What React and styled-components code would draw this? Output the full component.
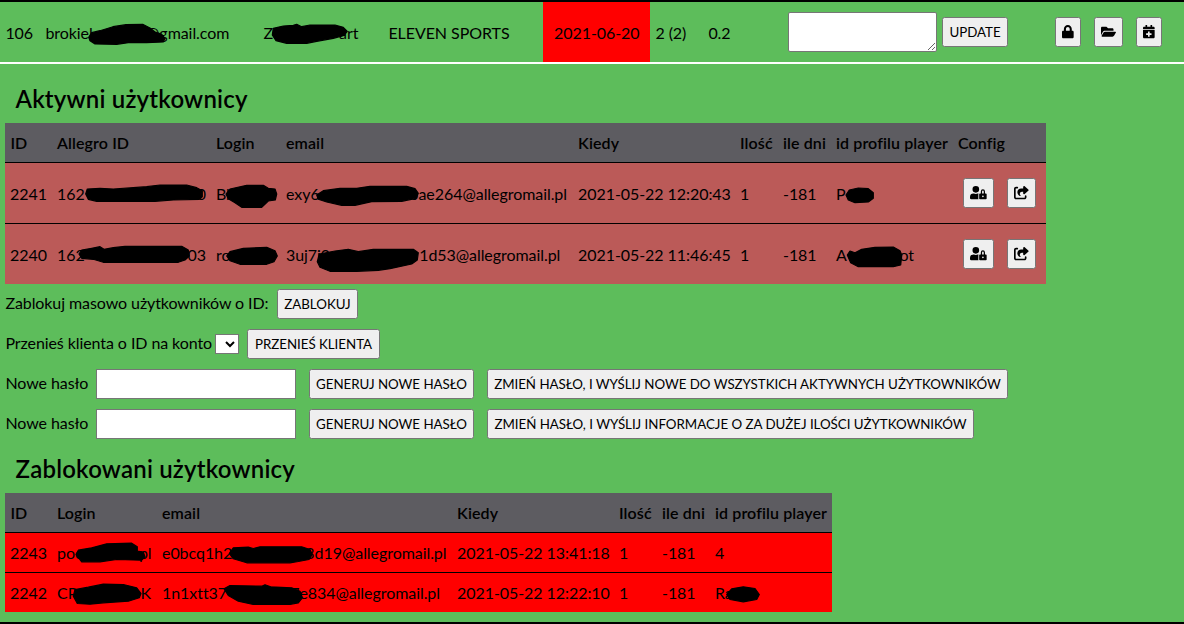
import React from 'react';
import styled, { createGlobalStyle } from 'styled-components';
import { FaLock, FaFolderOpen, FaCalendarPlus, FaUserLock } from 'react-icons/fa';
import { FaShareFromSquare } from 'react-icons/fa6';

const GlobalStyle = createGlobalStyle`
  *, *::before, *::after { box-sizing: border-box; }
  body {
    margin: 0;
    background: #5dbd5b;
    color: #000;
    font: 16px/24px Lato, sans-serif;
    letter-spacing: -0.06px;
    overflow: hidden;
  }
`;

const Page = styled.main`
  height: 624px;
  border-top: 2px solid #000;
  border-bottom: 2px solid #000;
`;

const AccountRow = styled.header`
  display: grid;
  grid-template-columns: 40px 218px 125px 160px 107px 53px 80px 267px 1fr;
  height: 62px;
  border-bottom: 2px solid #fff;
`;

const AccountCell = styled.div`
  display: flex;
  align-items: center;
  gap: ${(p) => p.$gap || 0}px;
  padding-left: ${(p) => p.$pad ?? 5.4}px;
  padding-top: ${(p) => (p.$gap ? 0 : 2)}px;
  background: ${(p) => p.$bg || 'transparent'};
  white-space: nowrap;
`;

const Note = styled.textarea`
  width: 149px;
  height: 40px;
  margin: 0;
  border: 1px solid #767676;
  border-radius: 2px;
  background: #fff;
`;

const Button = styled.button`
  display: inline-flex;
  align-items: center;
  justify-content: center;
  flex: none;
  width: ${(p) => (p.$w ? `${p.$w}px` : 'auto')};
  height: 30px;
  margin: 0;
  padding: 0;
  border: 1px solid #767676;
  border-radius: 2.5px;
  background: #efefef;
  color: #000;
  font: 13.333px/20px Lato, sans-serif;
  letter-spacing: -0.03px;
  white-space: nowrap;

  svg {
    width: ${(p) => p.$icon || 13.33}px;
    height: 13.33px;
    flex: none;
  }
`;

const Heading = styled.h2`
  height: ${(p) => p.$h}px;
  margin: 0;
  padding: 0 0 9px 15.5px;
  display: flex;
  align-items: flex-end;
  font-size: 24px;
  line-height: 30px;
  font-weight: 600;
  letter-spacing: 0.2px;
`;

const Table = styled.table`
  width: ${(p) => p.$w}px;
  margin-left: 5px;
  table-layout: fixed;
  border-collapse: separate;
  border-spacing: 0;
`;

const HeadCell = styled.th`
  width: ${(p) => p.$w}px;
  height: 40px;
  padding: 0 0 0 5px;
  background: #5d5c61;
  border-bottom: 1px solid #000;
  font-weight: 600;
  letter-spacing: 0.1px;
  text-align: left;
  white-space: nowrap;

  &:first-child { padding-left: 5.4px; }
`;

const Row = styled.tr`
  height: ${(p) => p.$h}px;
  background: ${(p) => p.$bg};

  &:not(:last-child) td { border-bottom: 1px solid #000; }
  &:last-child { height: ${(p) => p.$h - 1}px; }
  td { padding-top: ${(p) => p.$shift || 0}px; }
`;

const Cell = styled.td`
  padding: 0 0 0 5px;
  white-space: nowrap;
  vertical-align: middle;
`;

const Actions = styled.div`
  display: flex;
  gap: 13px;
  margin-top: -2px;
  padding-left: 5px;
`;

const Controls = styled.section`
  display: flex;
  flex-direction: column;
  gap: 10px;
  padding: 5px 0 0 5px;
`;

const ControlLine = styled.div`
  display: flex;
  align-items: center;
  height: 30px;
`;

const Label = styled.label`
  width: ${(p) => p.$w}px;
  flex: none;
  padding: 0 0 2px 0.4px;
  letter-spacing: -0.08px;
  white-space: nowrap;
`;

const Spacer = styled.span`
  width: ${(p) => p.$w}px;
  flex: none;
`;

const Password = styled.input`
  width: 200px;
  height: 30px;
  margin: 0 13px 0 0;
  border: 1px solid #767676;
  background: #fff;
`;

const AccountSelect = styled.select`
  width: 24px;
  height: 20px;
  margin: 0 8px 0 0;
  border: 1px solid #767676;
  background: #fff;
`;

const MaskedText = styled.span`
  position: relative;
  display: flex;
  justify-content: space-between;
  width: ${(p) => p.$w}px;
  height: 24px;
`;

const Scribble = styled.svg`
  position: absolute;
  left: 0;
  top: -1px;
  width: 100%;
  height: 100%;
  overflow: visible;
`;

function Masked({ start, end, width, shape }) {
  return (
    <MaskedText $w={width}>
      <span>{start}</span>
      <span>{end}</span>
      <Scribble aria-hidden="true">
        <polygon points={shape} fill="#000" stroke="#000" strokeWidth="1.2" strokeLinejoin="round" />
      </Scribble>
    </MaskedText>
  );
}

const activeColumns = [
  ['ID', 47], ['Allegro ID', 159], ['Login', 70], ['email', 292], ['Kiedy', 162],
  ['Ilość', 43], ['ile dni', 53], ['id profilu player', 122], ['Config', 93],
];

const blockedColumns = [
  ['ID', 47], ['Login', 105], ['email', 295], ['Kiedy', 162],
  ['Ilość', 43], ['ile dni', 53], ['id profilu player', 122],
];

const activeUsers = [
  [
    '2241',
    <Masked start="162" end="00" width={149} shape="28.7,13 30.3,8 43,7.3 56.3,8 76.3,6.7 89.7,5.7 103,4 129.7,4 139.7,6.7 145.3,9.7 145.3,15.7 142.3,18.3 116.3,19 98,20.3 39.7,20.3 31.3,18.3" />,
    <Masked start="Bl" width={61} shape="10,13 14,8 30.7,4.3 47.3,4.3 52.3,7.3 59,8 60.7,13 59.3,19 52.3,20 45.7,26.3 25.7,26.3 19,21.7 12.3,17.7" />,
    <Masked start="exy6" end="bae264@allegromail.pl" width={281} shape="30.7,14 37.3,9.7 54,7.3 70.7,7.3 84,5.3 120.7,5.3 129,7.7 132.3,12.3 130,17.3 115.7,20.3 85.7,20.7 69,24.3 55.7,24.3 40.7,21 32.3,18.3" />,
    '2021-05-22 12:20:43', '1', '-181',
    <Masked start="P" width={38} shape="10,14 13.3,9 22.3,7 32.3,7.7 37.3,11.7 37.3,17.3 32.3,21 19,21.7 12.3,19" />,
  ],
  [
    '2240',
    <Masked start="162" end="03" width={149} shape="22,12 24.7,8 34.7,6.3 43,4.7 47,7.3 56.3,5.7 68,4.3 124.7,4.3 131.3,8 132.3,14 128,18 121.3,20.3 46.3,20.3 36.3,17.3 24.7,16.3" />,
    <Masked start="ro" width={61} shape="10.7,14 14,9.7 27.3,6.3 50.7,5.3 59,8.7 61.3,14 58,19.7 50.7,22.3 24,22.3 14,18.7" />,
    <Masked start="3uj7i0" end="1d53@allegromail.pl" width={274.3} shape="31.3,19.7 33.3,12 49,9 62.3,7.3 72.3,9.7 87.3,7.3 127.3,7.3 132.3,10.7 131.3,18 125.7,22 104,26.7 92.3,28.3 70.7,29.3 44,29.3 34,25.3" />,
    '2021-05-22 11:46:45', '1', '-181',
    <Masked start="A" end="ot" width={78} shape="11.3,13 14,9 19,10.7 25.7,7.3 39,5.3 57.3,5 64,8.7 65.7,13 64.7,23 57.3,24.7 22.3,24.7 14.7,20.7" />,
  ],
];

const blockedUsers = [
  [
    '2243',
    <Masked start="poc" end="pl" width={94.5} shape="19,14.5 21.3,10.2 34.7,7.8 49.7,3.8 74.7,3.2 80.3,6.8 80.3,11.2 86.3,12.2 88,16.8 84.7,20.2 59.7,19.5 43,21.8 24.7,21.8" />,
    <Masked start="e0bcq1h2" end="3d19@allegromail.pl" width={284.5} shape="67.3,13.5 71.3,7.8 86.3,7.2 91.3,8.5 98,6.8 139.7,6.8 148,9.5 150.3,14.5 147,19.5 136.3,21.5 128,22.8 84.7,22.8 71.3,18.8" />,
    '2021-05-22 13:41:18', '1', '-181', '4',
  ],
  [
    '2242',
    <Masked start="CP" end="K" width={94} shape="16.3,16.2 18,9.5 31.3,7.2 46.3,4.2 66.3,4.5 79.7,7.8 84,13.5 82.3,17.8 71.3,21.2 46.3,22.8 33,24.2 20.3,23.5" />,
    <Masked start="1n1xtt37" end="7e834@allegromail.pl" width={278} shape="62,8.8 68,5.5 99.7,6.2 103,4.8 108.7,6.8 129.7,7.8 138,11.2 140.3,17.8 136.3,22.8 128,24.5 91.3,24.5 76.3,21.2 66.3,15.5" />,
    '2021-05-22 12:22:10', '1', '-181',
    <Masked start="Ra" width={45} shape="11.7,14.5 16.7,8.8 28.3,6.8 40,8.5 44.3,14.5 41.7,19.5 28.3,21.8 15,19.5" />,
  ],
];

function UserTable({ columns, users, width, rowHeight, rowColor, shift, actions }) {
  return (
    <Table $w={width}>
      <thead>
        <tr>
          {columns.map(([name, w]) => <HeadCell key={name} $w={w}>{name}</HeadCell>)}
        </tr>
      </thead>
      <tbody>
        {users.map((user) => (
          <Row key={user[0]} $h={rowHeight} $bg={rowColor} $shift={shift}>
            {user.map((value, i) => <Cell key={i}>{value}</Cell>)}
            {actions && (
              <Cell>
                <Actions>
                  <Button $w={31} $icon={16.67} aria-label="Zablokuj"><FaUserLock /></Button>
                  <Button $w={29} $icon={15} aria-label="Przenieś"><FaShareFromSquare /></Button>
                </Actions>
              </Cell>
            )}
          </Row>
        ))}
      </tbody>
    </Table>
  );
}

export default function App() {
  return (
    <>
      <GlobalStyle />
      <Page>
        <AccountRow>
          <AccountCell>106</AccountCell>
          <AccountCell>
            <Masked start="brokiel" end="@gmail.com" width={184} shape="43.7,17.3 46.7,12.7 55,10.7 68,6.7 81,4.7 97.7,4.3 105,8 109.7,11.7 116.7,14.3 120,18.3 118.3,22 101.7,22.7 83.3,22.7 71.7,24.3 50,24 45,20.7" />
          </AccountCell>
          <AccountCell>
            <Masked start="Z" end="art" width={95} shape="9.3,15 10.3,8.3 20.3,6 30.3,5.3 33.7,4.3 38.7,6.7 47,5 72,5 80.3,7.3 84.3,11.3 81,15.5 70.3,18.3 53.7,21.3 43.7,23.3 23.7,23.3 13,20.7" />
          </AccountCell>
          <AccountCell>ELEVEN SPORTS</AccountCell>
          <AccountCell $bg="#f00" $pad={11}>2021-06-20</AccountCell>
          <AccountCell>2 (2)</AccountCell>
          <AccountCell>0.2</AccountCell>
          <AccountCell $gap={5} $pad={5}>
            <Note />
            <Button $w={66}>UPDATE</Button>
          </AccountCell>
          <AccountCell $gap={13} $pad={5}>
            <Button $w={26} $icon={11.67} aria-label="Blokada"><FaLock /></Button>
            <Button $w={29} $icon={15} aria-label="Otwórz"><FaFolderOpen /></Button>
            <Button $w={26} $icon={11.67} aria-label="Przedłuż"><FaCalendarPlus /></Button>
          </AccountCell>
        </AccountRow>

        <Heading $h={59}>Aktywni użytkownicy</Heading>
        <UserTable columns={activeColumns} users={activeUsers} width={1041} rowHeight={61} rowColor="#bb5a58" shift={2} actions />

        <Controls>
          <ControlLine>
            <Label $w={272}>Zablokuj masowo użytkowników o ID:</Label>
            <Button $w={81}>ZABLOKUJ</Button>
          </ControlLine>
          <ControlLine>
            <Label $w={210}>Przenieś klienta o ID na konto</Label>
            <AccountSelect />
            <Button $w={133}>PRZENIEŚ KLIENTA</Button>
          </ControlLine>
          <ControlLine>
            <Label $w={91}>Nowe hasło</Label>
            <Password />
            <Button $w={165}>GENERUJ NOWE HASŁO</Button>
            <Spacer $w={13} />
            <Button $w={521}>ZMIEŃ HASŁO, I WYŚLIJ NOWE DO WSZYSTKICH AKTYWNYCH UŻYTKOWNIKÓW</Button>
          </ControlLine>
          <ControlLine>
            <Label $w={91}>Nowe hasło</Label>
            <Password />
            <Button $w={165}>GENERUJ NOWE HASŁO</Button>
            <Spacer $w={13} />
            <Button $w={487}>ZMIEŃ HASŁO, I WYŚLIJ INFORMACJE O ZA DUŻEJ ILOŚCI UŻYTKOWNIKÓW</Button>
          </ControlLine>
        </Controls>

        <Heading $h={54}>Zablokowani użytkownicy</Heading>
        <UserTable columns={blockedColumns} users={blockedUsers} width={827} rowHeight={40} rowColor="#f00" />
      </Page>
    </>
  );
}
